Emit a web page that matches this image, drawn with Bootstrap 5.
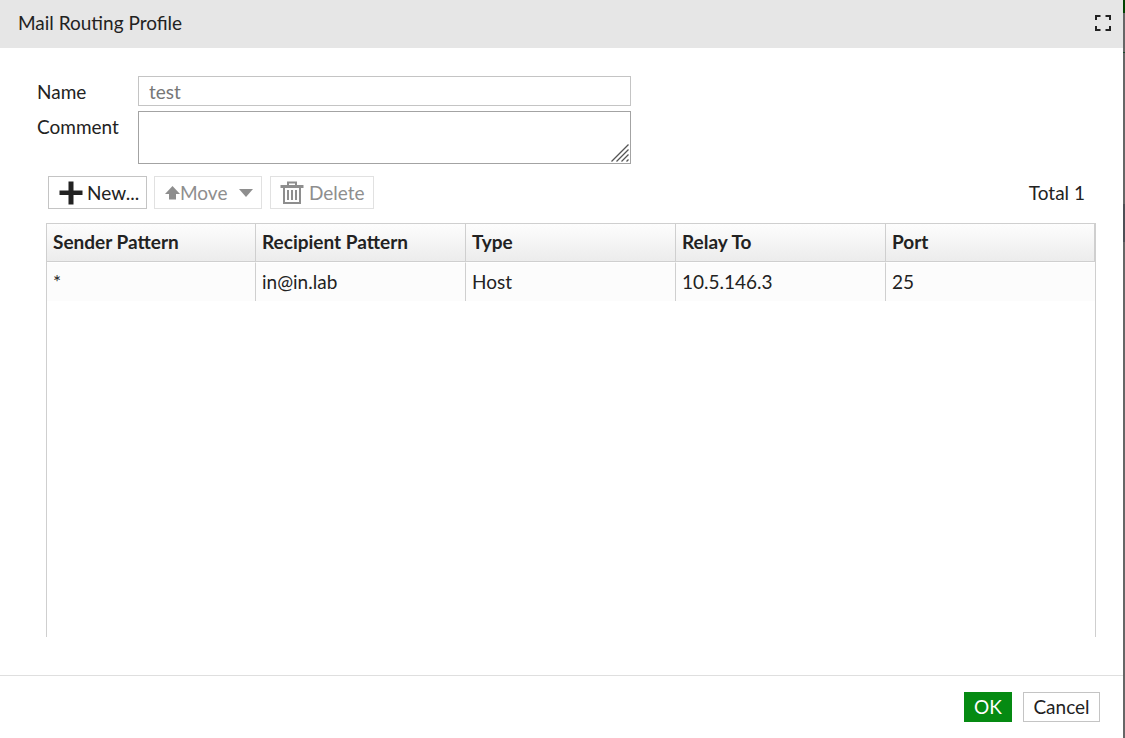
<!DOCTYPE html>
<html lang="en">
<head>
<meta charset="utf-8">
<title>Mail Routing Profile</title>
<link rel="stylesheet" href="https://cdn.jsdelivr.net/npm/bootstrap@5.3.0/dist/css/bootstrap.min.css">
<style>
body{font-family:Lato,sans-serif;font-size:19px;line-height:24px;color:#222;height:738px;overflow:hidden;background:#fff}
.dialog{width:1123px;height:738px}
.edge{width:2px;background:linear-gradient(#004200 13px,#666 13px 52px,#1c4a2c 52px 53px,#666 53px 204px,#4d4f55 204px 242px,#666 242px)}
.titlebar{height:48px;background:#e6e6e6;padding:0 12px 2px 18px}
.fields{padding:28px 0 0 37px}
.fields label{width:101px;padding-top:4px}
.fields .form-control{width:493px;font-size:19px;line-height:24px;border-radius:0;color:#777;padding:2px 10px;border:1px solid #c4c4c4;background:#fff}
.fields input.form-control{height:30px}
.fields textarea.form-control{height:53px;min-height:0;border-color:#a3a3a3;resize:none;display:block}
.grip{position:absolute;right:2px;bottom:2px}
.tools{padding:12px 38px 0 48px}
.btn{--bs-btn-font-size:19px;--bs-btn-line-height:24px;--bs-btn-border-radius:0;--bs-btn-color:#222;--bs-btn-border-color:#c4c4c4;--bs-btn-bg:#fff;--bs-btn-disabled-color:#8e8e8e;--bs-btn-disabled-border-color:#e1e1e1;--bs-btn-disabled-opacity:1;--bs-btn-disabled-bg:#fff;padding:0;white-space:nowrap}
.tools .btn{height:33px}
.records{margin:14px 27px 0 46px;height:414px;border:1px solid #cfcfcf;border-bottom:0}
.records table{font-size:19px;line-height:24px;table-layout:fixed;border-collapse:separate;border-spacing:0;--bs-table-color:#222;color:#222}
.records th,.records td{padding:6px 6px 7px;border:0;border-right:1px solid #cfcfcf}
.records th{height:37px;background:linear-gradient(#fdfdfd,#ececec);border-bottom:1px solid #cfcfcf}
.records td{height:38px;padding:7px 6px;background:#fcfcfc content-box;background:#fcfcfc;box-shadow:none}
.records td:last-child{border-right:0}
.records tbody td{border-top:1px solid #fff;background-clip:border-box}
.actions{height:63px;border-top:1px solid #dfdfdf;padding:16px 23px 0 0;gap:11px}
.actions .btn{height:30px}
.btn-ok{--bs-btn-bg:#058a12;--bs-btn-color:#fff;--bs-btn-border-color:#058a12}
</style>
</head>
<body>
<div class="d-flex">
<main class="dialog d-flex flex-column">
  <header class="titlebar d-flex align-items-center justify-content-between">
    <span>Mail Routing Profile</span>
    <svg width="16" height="16" viewBox="0 0 16 16" fill="none" stroke="#222" stroke-width="2"><path d="M1 5V1H5.5M10.5 1H15V5M15 11V15H10.5M5.5 15H1V11"/></svg>
  </header>
  <form class="fields">
    <div class="d-flex"><label for="name">Name</label><input id="name" class="form-control" value="test" readonly></div>
    <div class="d-flex" style="margin-top:5px"><label for="comment">Comment</label>
      <div class="position-relative"><textarea id="comment" class="form-control"></textarea>
        <svg class="grip" width="18" height="18" viewBox="0 0 18 18" stroke="#555" stroke-width="1.3" fill="none"><path d="M.5 17.5L17.5.5M5.5 17.5L17.5 5.5M10.5 17.5L17.5 10.5M15.5 17.5L17.5 15.5"/></svg></div></div>
  </form>
  <div class="tools d-flex align-items-center">
    <button class="btn d-flex align-items-center" style="width:99px;padding-left:10px"><svg width="24" height="24" viewBox="0 0 24 24"><path fill="#222" d="M9.5.5h5v9H23.5v4.5H14.5v9.5h-5V14H.5V9.500h9z"/></svg><span style="margin-left:4px">New...</span></button>
    <button class="btn d-flex align-items-center" disabled style="width:108px;margin-left:7px;padding-left:10px"><svg width="15" height="14" viewBox="0 0 15 14"><path fill="#8e8e8e" d="M7.500 0L15 8H11V13.500H4V8H0z"/></svg><span>Move</span><svg style="margin-left:12px" width="14" height="8" viewBox="0 0 14 8"><path fill="#8e8e8e" d="M0 0h14L7 8z"/></svg></button>
    <button class="btn d-flex align-items-center" disabled style="width:104px;margin-left:8px;padding-left:9px"><svg width="24" height="24" viewBox="0 0 24 24" fill="none" stroke="#8e8e8e"><path stroke-width="2" d="M8 4V1.500h8V4M4 7V22h16V7"/><path stroke-width="3" d="M.5 5.500H23.500"/><path stroke-width="2" d="M8 9V19M12 9V19M16 9V19"/></svg><span style="margin-left:5px">Delete</span></button>
    <span class="ms-auto">Total 1</span>
  </div>
  <div class="records">
    <table class="w-100">
      <colgroup><col style="width:209px"><col style="width:210px"><col style="width:210px"><col style="width:210px"><col></colgroup>
      <thead><tr><th>Sender Pattern</th><th>Recipient Pattern</th><th>Type</th><th>Relay To</th><th>Port</th></tr></thead>
      <tbody><tr><td>*</td><td>in@in.lab</td><td>Host</td><td>10.5.146.3</td><td>25</td></tr></tbody>
    </table>
  </div>
  <footer class="actions d-flex justify-content-end mt-auto">
    <button class="btn btn-ok" style="width:48px">OK</button>
    <button class="btn" style="width:77px">Cancel</button>
  </footer>
</main>
<div class="edge"></div>
</div>
<script src="https://cdn.jsdelivr.net/npm/bootstrap@5.3.0/dist/js/bootstrap.bundle.min.js"></script>
</body>
</html>
